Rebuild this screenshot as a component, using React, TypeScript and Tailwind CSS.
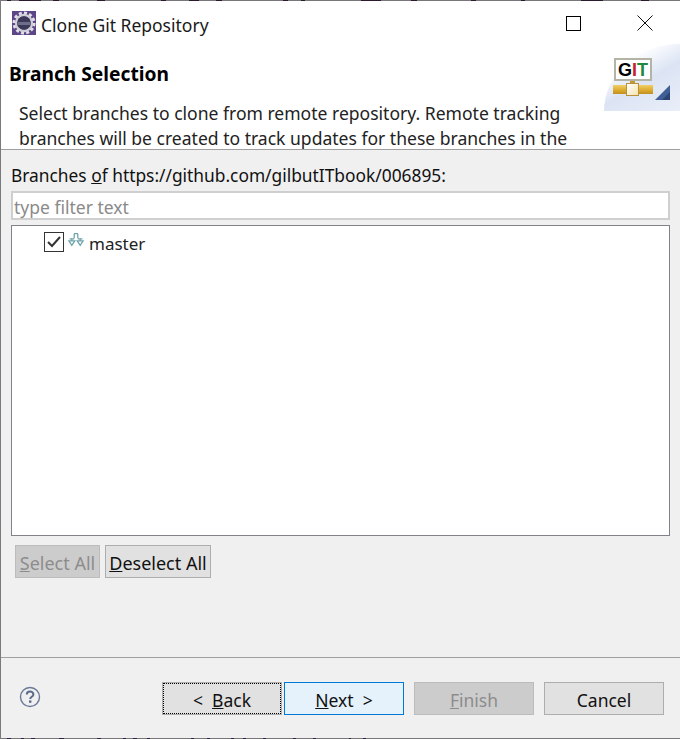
import React from 'react';

const uiFont = { fontFamily: '"Noto Sans", "Open Sans", sans-serif' };

// dark bits of whatever sat behind the window when it was captured
const topBits = [[6, 4], [18, 22], [52, 6], [96, 8], [160, 5], [188, 10], [215, 6], [282, 5], [300, 4], [360, 20], [410, 6], [470, 5], [520, 4], [580, 22], [640, 8]];
const bottomBits = [[6, 4], [20, 3], [30, 4], [58, 5], [96, 4], [122, 3], [132, 4], [146, 3], [190, 3], [206, 3], [230, 3], [242, 3], [262, 3], [292, 3], [312, 3], [348, 2], [362, 3]];

const Bits = ({ items, color }: { items: number[][]; color: string }) => (
  <>
    {items.map(([x, w]) => (
      <span key={x} className="absolute top-0 h-px" style={{ left: x, width: w, background: color }} />
    ))}
  </>
);

const GearIcon = () => (
  <svg width="24" height="24" viewBox="0 0 24 24" className="shrink-0">
    <rect width="24" height="24" fill="#5c4688" />
    <circle cx="12" cy="12" r="10" fill="none" stroke="#e2e2e6" strokeWidth="3" strokeDasharray="3 2.2" />
    <circle cx="12" cy="12" r="8" fill="none" stroke="#cfcfd6" strokeWidth="2.4" />
    <circle cx="12" cy="12" r="6.8" fill="#3b3858" />
    <rect x="5.5" y="11" width="13" height="3" fill="#6f6d8c" />
  </svg>
);

const BranchIcon = () => (
  <svg width="16" height="14" viewBox="0 0 16 14" fill="none" stroke="#6fa5ab" strokeWidth="1.3" className="shrink-0">
    <path d="M6 .7h4M6.2.7v4.6M9.8.7v4.6M1.5 5.8h4.7M9.8 5.8h4.7M3.8 5.8v2M12.2 5.8v2M.8 7.8h6l-3 4.6zM9.2 7.8h6l-3 4.6z" />
  </svg>
);

const HelpIcon = () => (
  <svg width="22" height="22" viewBox="0 0 22 22" fill="none">
    <circle cx="11" cy="11" r="9.5" stroke="#6b7a99" strokeWidth="1.4" />
    <path d="M7.8 8.6c0-4.2 6.6-4 6.6-.2 0 2.4-3.2 2.4-3.2 4.6" stroke="#5a6a8a" strokeWidth="2" />
    <rect x="10" y="14.4" width="2.4" height="2.4" fill="#5a6a8a" />
  </svg>
);

const GitBanner = () => (
  <div className="absolute right-0 top-[44px] h-[67px] w-[76px]">
    <div className="absolute inset-0 bg-[linear-gradient(150deg,#ffffff_25%,#dce4f4_55%,#e9eef8_100%)] [clip-path:ellipse(100%_100%_at_100%_100%)]" />
    <div className="absolute left-[10px] top-[14px] flex h-[23px] w-[38px] items-center justify-center border-2 border-[#b3b3a6] bg-white text-[18px] font-bold leading-none" style={{ fontFamily: '"Liberation Sans", sans-serif' }}>
      <span className="text-black">G</span>
      <span className="text-[#c8202a]">I</span>
      <span className="text-[#1c8a3a]">T</span>
    </div>
    <div className="absolute left-[9px] top-[41px] h-[9px] w-[40px] bg-[linear-gradient(#f0cf6a,#dba92c_60%,#c08f20)]" />
    <div className="absolute left-[22px] top-[39px] h-[13px] w-[13px] border border-[#b8923a] bg-[linear-gradient(135deg,#ffffff,#f5e3b0)]" />
    <div className="absolute left-[26px] top-[37px] h-[2px] w-[5px] bg-[#c49a30]" />
    <svg width="15" height="15" viewBox="0 0 15 15" className="absolute left-[51px] top-[41px]">
      <path d="M15 0v15H0z" fill="#3f5f96" />
      <path d="M15 7v8H7z" fill="#2c4473" />
    </svg>
  </div>
);

const Btn = ({ children, className = '' }: { children: React.ReactNode; className?: string }) => (
  <div className={`flex h-[33px] w-[120px] items-center justify-center border text-[17.5px] leading-none ${className}`}>
    {children}
  </div>
);

export default function App() {
  return (
    <div className="relative flex h-[739px] w-[680px] flex-col overflow-hidden border-l border-[#7a7a7a] bg-[#f0f0f0] text-[18px] text-black" style={uiFont}>
      {/* header area */}
      <div className="h-[150px] shrink-0 overflow-hidden border-b border-[#a0a0a0] bg-white">
        <div className="flex h-[50px] items-center pl-[11px] pt-[1px]">
          <div className="-mt-[5px]"><GearIcon /></div>
          <span className="ml-[5px] text-[17.5px] text-[#1a1a1a]">Clone Git Repository</span>
          <div className="-mt-[5px] ml-auto mr-[27px] flex items-center gap-[56px]">
            <div className="h-[15px] w-[15px] border border-black" />
            <svg width="16" height="16" viewBox="0 0 16 16" stroke="#111" strokeWidth="1">
              <path d="M.5.5l15 15M15.5.5l-15 15" />
            </svg>
          </div>
        </div>
        <div className="pl-[8px] pt-[11px] text-[19.2px] font-bold leading-[26px]">Branch Selection</div>
        <div className="pl-[18px] pt-[14px] pr-[100px] text-[17.55px] leading-[25px] text-[#222] whitespace-nowrap">
          <div>Select branches to clone from remote repository. Remote tracking</div>
          <div>branches will be created to track updates for these branches in the</div>
        </div>
      </div>
      <GitBanner />
      <div className="absolute left-0 right-0 top-0 h-px bg-[#77777a]">
        <Bits items={topBits} color="#2b1a2e" />
      </div>

      {/* branch list */}
      <div className="flex flex-1 flex-col px-[10px] pt-[13px]">
        <div className="text-[17.35px] leading-[25px] text-[#111]">
          Branches <span className="underline">o</span>f https://github.com/gilbutITbook/006895:
        </div>
        <div className="mt-[3px] h-[29px] border-2 border-[#cfcfcf] bg-white pl-[1px] text-[17.5px] leading-[29px] text-[#8a8a8a]">
          type filter text
        </div>
        <div className="mt-[5px] h-[311px] border border-[#82828c] bg-white pl-[32px] pt-[5px]">
          <div className="-mt-[1px] flex h-[24px] items-center">
            <div className="flex h-[20px] w-[20px] items-center justify-center border border-[#333]">
              <svg width="14" height="12" viewBox="0 0 14 12" fill="none" stroke="#333" strokeWidth="2">
                <path d="M1 6l4 4 8-9" />
              </svg>
            </div>
            <span className="ml-[4px] -mt-[4px]"><BranchIcon /></span>
            <span className="ml-[5px] h-[24px] text-[17px] leading-[28px] text-[#222]">master</span>
          </div>
        </div>
        <div className="ml-[4px] mt-[9px] flex gap-[5px] text-[18px] leading-none">
          <div className="flex h-[33px] w-[85px] items-center justify-center border border-[#bcbcbc] bg-[#cccccc] pt-[2px] text-[#8c8c8c]">
            <span><span className="underline">S</span>elect All</span>
          </div>
          <div className="flex h-[33px] w-[106px] items-center justify-center border border-[#adadad] bg-[#e1e1e1] pt-[2px] text-[#111]">
            <span><span className="underline">D</span>eselect All</span>
          </div>
        </div>
      </div>

      {/* footer */}
      <div className="flex h-[81px] shrink-0 items-start border-t border-[#a0a0a0] pl-[18px] pt-[24px]">
        <div className="mt-[4px]"><HelpIcon /></div>
        <div className="ml-[121px] flex">
          <Btn className="border-[#adadad] bg-[#e1e1e1] outline-1 -outline-offset-2 outline-dotted outline-black text-[#111]">
            <span className="pt-[4px]">&lt;&nbsp; <span className="underline">B</span>ack</span>
          </Btn>
          <Btn className="ml-[2px] border-[#0078d7] bg-[#e5f1fb] text-[#111]">
            <span className="pt-[4px]"><span className="underline">N</span>ext &nbsp;&gt;</span>
          </Btn>
          <Btn className="ml-[10px] border-[#bcbcbc] bg-[#cccccc] text-[#8c8c8c]">
            <span className="pt-[4px]"><span className="underline">F</span>inish</span>
          </Btn>
          <Btn className="ml-[10px] border-[#adadad] bg-[#e1e1e1] text-[#111]">
            <span className="pt-[4px]">Cancel</span>
          </Btn>
        </div>
      </div>
      <div className="relative h-px shrink-0 bg-[#77777a]">
        <Bits items={bottomBits} color="#2c2440" />
      </div>
    </div>
  );
}
